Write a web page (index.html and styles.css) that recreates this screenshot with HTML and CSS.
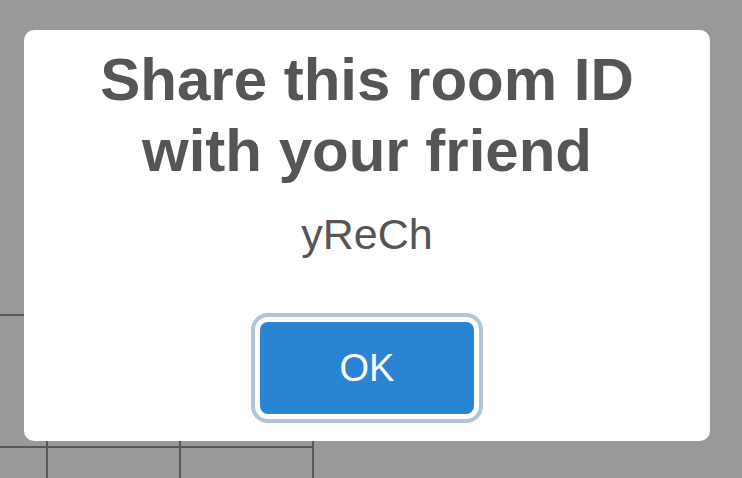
FILE: index.html
```html
<!DOCTYPE html>
<html lang="en">
<head>
<meta charset="utf-8">
<title>Share room</title>
<link rel="stylesheet" href="styles.css">
</head>
<body>
<div class="board">
  <div class="cell"></div><div class="cell"></div><div class="cell"></div>
  <div class="cell"></div><div class="cell"></div><div class="cell"></div>
</div>
<div class="overlay">
  <div class="modal">
    <h2 class="modal-title">Share this room ID<br>with your friend</h2>
    <p class="room-id">yReCh</p>
    <button class="ok-btn" type="button">OK</button>
  </div>
</div>
</body>
</html>
```

FILE: styles.css
```css
html, body {
  margin: 0;
  padding: 0;
  height: 100%;
  overflow: hidden;
}
body {
  background: #999999;
  font-family: "Liberation Sans", Arial, Helvetica, sans-serif;
}
.board {
  display: grid;
  grid-template-columns: repeat(3, 131px);
  grid-template-rows: 130px 30px;
  gap: 2px;
  padding: 2px 2px 0 2px;
  width: max-content;
  margin-top: 314px;
  margin-left: -87px;
  background: #585858;
}
.cell {
  background: #999999;
}
.overlay {
  position: fixed;
  inset: 0;
  display: flex;
  align-items: flex-start;
  justify-content: flex-start;
  padding: 30px 0 0 24px;
}
.modal {
  width: 686px;
  height: 411px;
  box-sizing: border-box;
  background: #ffffff;
  border-radius: 10px;
  padding-top: 14px;
  display: flex;
  flex-direction: column;
  align-items: center;
  color: #555555;
}
.modal-title {
  margin: 0;
  font-size: 60px;
  line-height: 71px;
  font-weight: bold;
  text-align: center;
}
.room-id {
  margin: 25px 0 0;
  font-size: 43px;
  line-height: 46px;
}
.ok-btn {
  margin-top: 65px;
  width: 214px;
  height: 92px;
  border: none;
  border-radius: 8px;
  background: #2b83d3;
  color: #ffffff;
  font-family: "Liberation Sans", Arial, Helvetica, sans-serif;
  font-size: 38px;
  outline: 4px solid #b2c4d5;
  outline-offset: 5px;
  padding: 0;
}
```
